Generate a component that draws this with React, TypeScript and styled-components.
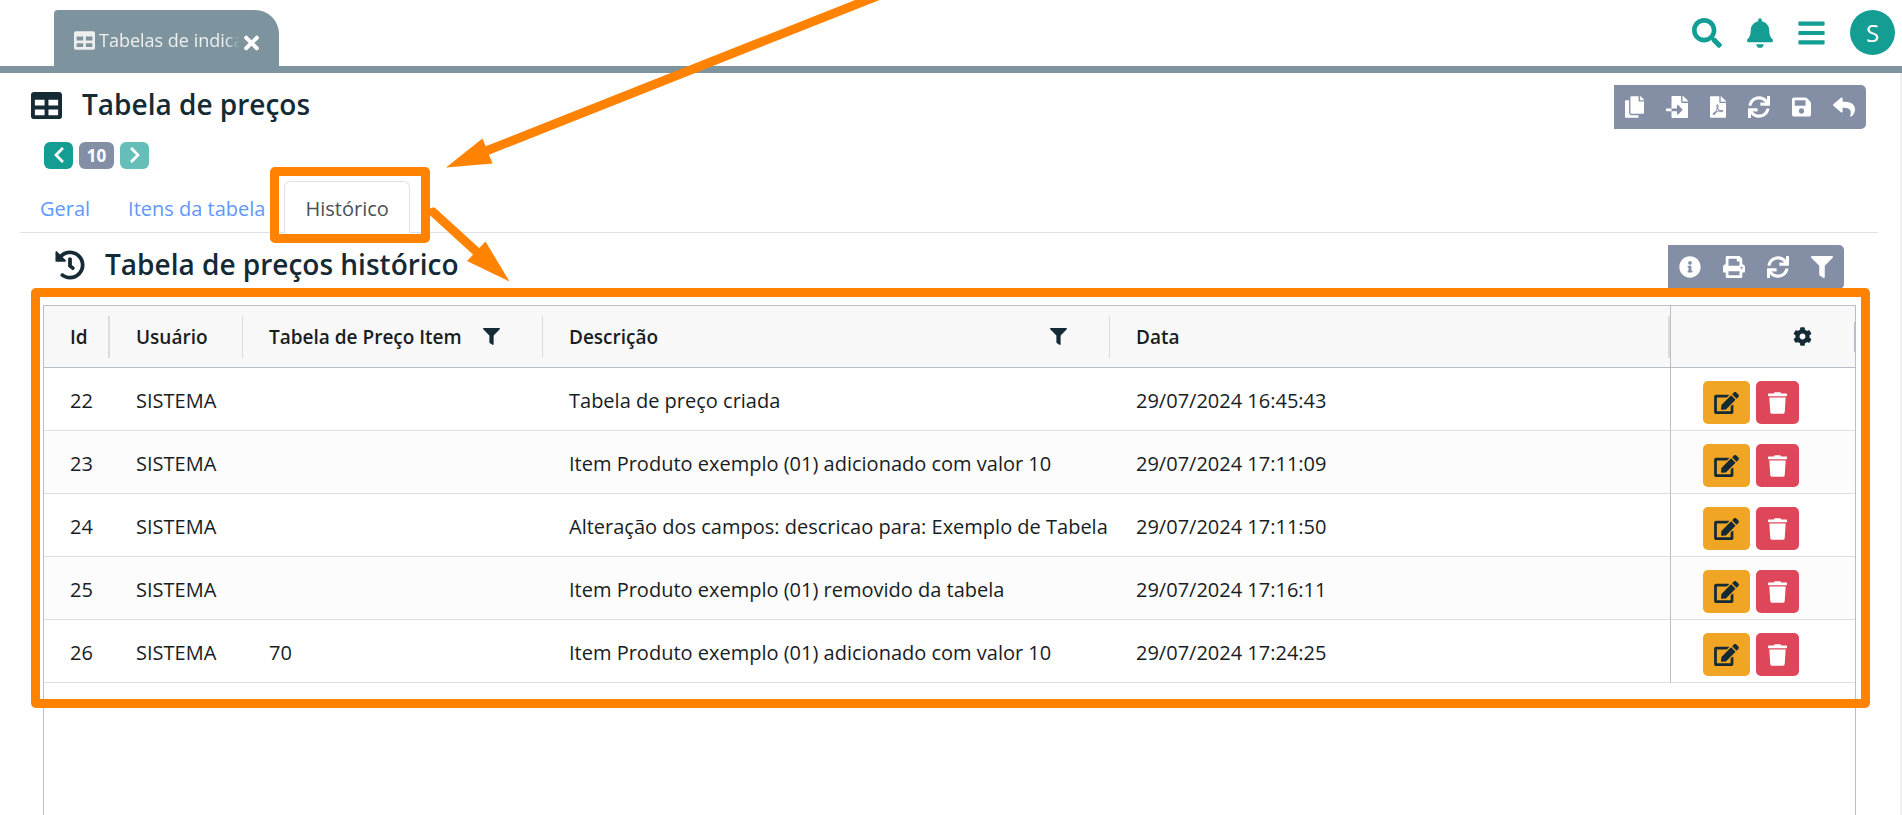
import React from 'react';
import styled, { createGlobalStyle, css } from 'styled-components';
import {
  FaBars, FaBell, FaChevronLeft, FaChevronRight, FaCog, FaCopy, FaEdit, FaFileImport, FaFilePdf,
  FaFilter, FaHistory, FaInfoCircle, FaPrint, FaReply, FaSave, FaSearch, FaSync, FaTable, FaTimes, FaTrash,
} from 'react-icons/fa';

const color = {
  ink: '#142a35',
  text: '#181d1f',
  teal: '#149e93',
  slate: '#7d939d',
  tool: '#848fa6',
  line: '#babfc7',
  rule: '#dee2e6',
  row: '#dddfe8',
  mark: '#ff8200',
};

const GlobalStyle = createGlobalStyle`
  *, *::before, *::after { box-sizing: border-box; }
  body {
    margin: 0;
    background: #fff;
    color: ${color.ink};
    font: 400 20px/30px "Open Sans", "Noto Sans", sans-serif;
    overflow: hidden;
  }
  button { font: inherit; color: inherit; border: 0; padding: 0; margin: 0; background: none; cursor: pointer; }
  svg { display: block; flex: none; }
`;

/* Icon whose box is as wide as its own glyph; square when no width is given. */
const Glyph = styled.svg<{ $h: number; $w?: number }>`
  width: ${(p) => p.$w ?? p.$h}px;
  height: ${(p) => p.$h}px;
`;

const Page = styled.div`
  position: relative;
  display: flex;
  flex-direction: column;
  height: 100vh;
  overflow: hidden;
`;

const TopBar = styled.header`
  display: flex;
  align-items: flex-end;
  justify-content: space-between;
  height: 73px;
  padding: 0 7px 0 54px;
  border-bottom: 7px solid ${color.slate};
`;

const WindowTab = styled.div`
  display: flex;
  align-items: center;
  gap: 4px;
  width: 225px;
  height: 56px;
  padding: 4px 20px 0;
  border-radius: 4px 24px 0 0;
  background: ${color.slate};
  color: #eee;
  font-size: 18px;
`;

const WindowTitle = styled.span`
  flex: 1;
  overflow: hidden;
  white-space: nowrap;
  mask-image: linear-gradient(to right, #000 90%, transparent);
`;

const CloseButton = styled.button`
  display: flex;
  padding-top: 5px;
  color: #fff;
`;

const TopActions = styled.nav`
  display: flex;
  align-items: center;
  gap: 25px;
  height: 45px;
  margin-bottom: 11px;
  color: ${color.teal};
`;

const Avatar = styled.button`
  width: 45px;
  height: 45px;
  border-radius: 50%;
  background: ${color.teal};
  color: #fff;
  font-size: 24px;
`;

const Main = styled.main`
  flex: 1;
  display: flex;
  flex-direction: column;
  min-height: 0;
  padding: 12px 22px 0 20px;
  border-right: 2px solid #f0f0f0;
`;

const Heading = styled.div<{ $nested?: boolean }>`
  display: flex;
  align-items: flex-start;
  justify-content: space-between;
  padding: ${(p) => (p.$nested ? '12px 34px 0 35px' : '0 12px 0 11px')};
`;

const Title = styled.div`
  display: flex;
  align-items: center;
  gap: 20px;
  height: 40px;
  h1, h2 { margin: 0 0 2px; font-size: 28px; line-height: 38px; font-weight: 600; }
`;

const Toolbar = styled.div`
  display: flex;
  border-radius: 0 5px 5px 0;
  background: ${color.tool};
  color: #fff;
  button {
    display: grid;
    place-items: center;
    padding: 0 11px;
    height: 44px;
  }
`;

const Pager = styled.div`
  display: flex;
  align-items: center;
  gap: 6px;
  height: 28px;
  margin: 12px 0 12px 24px;
`;

const PageButton = styled.button`
  display: grid;
  place-items: center;
  width: 29px;
  height: 27px;
  border-radius: 6px;
  background: ${color.teal};
  color: #fff;
  &:disabled { opacity: 0.65; }
`;

const PageNumber = styled.span`
  width: 35px;
  height: 27px;
  border-radius: 6px;
  background: ${color.tool};
  color: #fff;
  font-size: 17px;
  line-height: 27px;
  font-weight: 700;
  text-align: center;
`;

const Tabs = styled.nav`
  display: flex;
  height: 52px;
  padding-left: 1px;
  border-bottom: 1px solid ${color.rule};
`;

const Tab = styled.a<{ $active?: boolean }>`
  position: relative;
  height: 52px;
  padding: 12px 18px 0;
  border: 1px solid transparent;
  border-bottom: 0;
  border-radius: 6px 6px 0 0;
  color: #6197ff;
  text-decoration: none;
  ${(p) => p.$active && css`
    padding: 12px 20px 0;
    background: #fff;
    border-color: ${color.rule};
    color: #495057;
  `}
`;

const Highlight = styled.span<{ $inset: string }>`
  position: absolute;
  inset: ${(p) => p.$inset};
  border: 9px solid ${color.mark};
  border-radius: 5px;
  pointer-events: none;
`;

const GridPanel = styled.section`
  flex: 1;
  margin: 16px 22px 0 23px;
  border: 1px solid ${color.line};
  border-bottom: 0;
`;

const GridArea = styled.div`
  position: relative;
`;

const Grid = styled.table`
  width: 100%;
  table-layout: fixed;
  border-collapse: separate;
  border-spacing: 0;
  color: ${color.text};
`;

const HeadCell = styled.th<{ $pinned?: boolean }>`
  height: 62px;
  padding: 0;
  background: #f8f8f8;
  border-bottom: 1px solid ${color.line};
  border-left: ${(p) => (p.$pinned ? `1px solid ${color.line}` : '0')};
  font-size: 19px;
  font-weight: 600;
  text-align: left;
  white-space: nowrap;
`;

const HeadContent = styled.div<{ $edge: number; $pinned?: boolean; $filter?: boolean }>`
  display: flex;
  align-items: center;
  justify-content: ${(p) => (p.$pinned ? 'flex-end' : 'space-between')};
  height: ${(p) => (p.$pinned ? 30 : 42)}px;
  padding: 0 ${(p) => (p.$pinned || p.$filter ? 42 : 8)}px 0 26px;
  border-right: ${(p) => p.$edge}px solid ${(p) => (p.$pinned ? color.line : '#dadce0')};
  svg { color: ${color.ink}; }
`;

const Row = styled.tr`
  &:nth-child(even) { background: #fcfcfc; }
`;

const Cell = styled.td<{ $pinned?: boolean }>`
  height: 63px;
  padding: ${(p) => (p.$pinned ? '0 0 0 26px' : '4px 0 0 26px')};
  border-bottom: 1px solid ${color.row};
  border-left: ${(p) => (p.$pinned ? `1px solid ${color.line}` : '0')};
  overflow: hidden;
  white-space: nowrap;
`;

const RowActions = styled.div`
  display: flex;
  gap: 6px;
  padding: 7px 0 0 6px;
`;

const ActionButton = styled.button<{ $danger?: boolean }>`
  display: grid;
  place-items: center;
  width: ${(p) => (p.$danger ? 43 : 47)}px;
  height: 43px;
  border-radius: 5px;
  background: ${(p) => (p.$danger ? '#de475a' : '#f0a624')};
  color: ${(p) => (p.$danger ? '#fff' : color.ink)};
`;

const Arrows = styled.svg`
  position: absolute;
  top: 0;
  left: 0;
  pointer-events: none;
`;

const columns = [
  { label: 'Id', width: 66, edge: 2 },
  { label: 'Usuário', width: 133, edge: 1 },
  { label: 'Tabela de Preço Item', width: 300, edge: 1, filter: true },
  { label: 'Descrição', width: 567, edge: 1, filter: true },
  { label: 'Data', edge: 2 },
];

const rows = [
  ['22', 'SISTEMA', '', 'Tabela de preço criada', '29/07/2024 16:45:43'],
  ['23', 'SISTEMA', '', 'Item Produto exemplo (01) adicionado com valor 10', '29/07/2024 17:11:09'],
  ['24', 'SISTEMA', '', 'Alteração dos campos: descricao para: Exemplo de Tabela de', '29/07/2024 17:11:50'],
  ['25', 'SISTEMA', '', 'Item Produto exemplo (01) removido da tabela', '29/07/2024 17:16:11'],
  ['26', 'SISTEMA', '70', 'Item Produto exemplo (01) adicionado com valor 10', '29/07/2024 17:24:25'],
];

const pageTools = [
  { label: 'Duplicar', icon: FaCopy, width: 19 },
  { label: 'Importar', icon: FaFileImport, width: 22 },
  { label: 'Exportar PDF', icon: FaFilePdf, width: 16 },
  { label: 'Atualizar', icon: FaSync, width: 22 },
  { label: 'Salvar', icon: FaSave, width: 19 },
  { label: 'Voltar', icon: FaReply, width: 22 },
];

const gridTools = [
  { label: 'Informações', icon: FaInfoCircle, width: 22 },
  { label: 'Imprimir', icon: FaPrint, width: 22 },
  { label: 'Atualizar', icon: FaSync, width: 22 },
  { label: 'Filtrar', icon: FaFilter, width: 22 },
];

export default function App() {
  return (
    <Page>
      <GlobalStyle />
      <TopBar>
        <WindowTab>
          <Glyph as={FaTable} $h={21} />
          <WindowTitle>Tabelas de indica</WindowTitle>
          <CloseButton aria-label="Fechar"><Glyph as={FaTimes} $h={22} $w={15} /></CloseButton>
        </WindowTab>
        <TopActions>
          <button aria-label="Pesquisar"><Glyph as={FaSearch} $h={30} /></button>
          <button aria-label="Notificações"><Glyph as={FaBell} $h={30} $w={26} /></button>
          <button aria-label="Menu"><Glyph as={FaBars} $h={30} $w={27} /></button>
          <Avatar aria-label="Perfil">S</Avatar>
        </TopActions>
      </TopBar>

      <Main>
        <Heading>
          <Title><Glyph as={FaTable} $h={31} /><h1>Tabela de preços</h1></Title>
          <Toolbar>
            {pageTools.map(({ label, icon, width }) => (
              <button key={label} aria-label={label}><Glyph as={icon} $h={22} $w={width} /></button>
            ))}
          </Toolbar>
        </Heading>

        <Pager>
          <PageButton aria-label="Anterior"><Glyph as={FaChevronLeft} $h={18} /></PageButton>
          <PageNumber>10</PageNumber>
          <PageButton aria-label="Próximo" disabled><Glyph as={FaChevronRight} $h={18} /></PageButton>
        </Pager>

        <Tabs>
          <Tab href="#geral">Geral</Tab>
          <Tab href="#itens">Itens da tabela</Tab>
          <Tab href="#historico" $active>
            Histórico
            <Highlight $inset="-15px -21px -10px -15px" />
          </Tab>
        </Tabs>

        <Heading $nested>
          <Title><Glyph as={FaHistory} $h={30} /><h2>Tabela de preços histórico</h2></Title>
          <Toolbar>
            {gridTools.map(({ label, icon, width }) => (
              <button key={label} aria-label={label}><Glyph as={icon} $h={22} $w={width} /></button>
            ))}
          </Toolbar>
        </Heading>

        <GridPanel>
          <GridArea>
            <Grid>
              <colgroup>
                {columns.map((c) => <col key={c.label} width={c.width} />)}
                <col width={185} />
              </colgroup>
              <thead>
                <tr>
                  {columns.map((c) => (
                    <HeadCell key={c.label}>
                      <HeadContent $edge={c.edge} $filter={c.filter}>
                        {c.label}
                        {c.filter && <Glyph as={FaFilter} $h={17} />}
                      </HeadContent>
                    </HeadCell>
                  ))}
                  <HeadCell $pinned>
                    <HeadContent $edge={1} $pinned>
                      <button aria-label="Configurações"><Glyph as={FaCog} $h={19} /></button>
                    </HeadContent>
                  </HeadCell>
                </tr>
              </thead>
              <tbody>
                {rows.map((cells) => (
                  <Row key={cells[0]}>
                    {cells.map((value, i) => <Cell key={i}>{value}</Cell>)}
                    <Cell $pinned>
                      <RowActions>
                        <ActionButton aria-label="Editar"><Glyph as={FaEdit} $h={22} $w={25} /></ActionButton>
                        <ActionButton $danger aria-label="Excluir"><Glyph as={FaTrash} $h={22} $w={19} /></ActionButton>
                      </RowActions>
                    </Cell>
                  </Row>
                ))}
              </tbody>
            </Grid>
            <Highlight $inset="-18px -15px -25px -13px" />
          </GridArea>
        </GridPanel>
      </Main>

      <Arrows width="900" height="290" viewBox="0 0 900 290" aria-hidden="true">
        <g stroke={color.mark} strokeWidth="9" strokeLinecap="round">
          <path d="M880 -5 L486 151" />
          <path d="M433 212 L478 253" />
        </g>
        <g fill={color.mark}>
          <path d="M446 167.500 L482.500 138.500 L492.500 163.500 Z" />
          <path d="M509.500 281.500 L467 261 L485.500 241.500 Z" />
        </g>
      </Arrows>
    </Page>
  );
}
